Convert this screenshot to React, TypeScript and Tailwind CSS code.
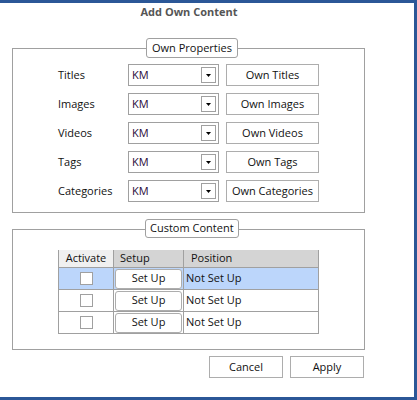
import React from "react";

const rows = ["Titles", "Images", "Videos", "Tags", "Categories"];
const btns = ["Own Titles", "Own Images", "Own Videos", "Own Tags", "Own Categories"];

function Caret() {
  return (
    <svg width="5" height="3" viewBox="0 0 5 3">
      <path d="M0 0 H5 L2.5 3 Z" fill="#000" />
    </svg>
  );
}

function Combo() {
  return (
    <div className="w-[91px] h-[22px] border border-[#a0a0a0] bg-white flex items-center justify-between pl-[3px] pr-[2px]">
      <span className="text-[#2a0a3a]">KM</span>
      <div className="w-[15px] h-[16px] border border-[#a0a0a0] flex items-center justify-center">
        <Caret />
      </div>
    </div>
  );
}

function Btn({ label, w }: { label: string; w: string }) {
  return (
    <div className={`${w} h-[22px] border border-[#adadad] bg-white flex items-center justify-center`}>
      {label}
    </div>
  );
}

export default function App() {
  return (
    <div className="w-[417px] h-[400px] bg-white border-t-[3px] border-r-[3px] border-b-[3px] border-[#2b5797] font-['Open_Sans',sans-serif] text-[11px] text-[#111] overflow-hidden">
      <div className="mt-px h-[16px] leading-[16px] w-[378px] text-center font-bold text-[#555]">Add Own Content</div>

      <div className="relative mt-[28px] ml-[12px] w-[353px] h-[165px] border border-[#a0a0a0]">
        <div className="absolute top-[-11px] left-[133px] h-[20px] px-[5px] border border-[#a0a0a0] rounded-[3px] bg-white flex items-center">
          Own Properties
        </div>
        <div className="pt-[15px] pl-[45px] flex flex-col gap-[7px]">
          {rows.map((r, i) => (
            <div key={r} className="flex items-center h-[22px]">
              <div className="w-[70px]">{r}</div>
              <Combo />
              <div className="ml-[7px]">
                <Btn label={btns[i]} w="w-[93px]" />
              </div>
            </div>
          ))}
        </div>
      </div>

      <div className="relative mt-[16px] ml-[12px] w-[353px] h-[121px] border border-[#a0a0a0]">
        <div className="absolute top-[-11px] left-[132px] h-[19px] px-[4px] border border-[#a0a0a0] rounded-[3px] bg-white flex items-center">
          Custom Content
        </div>
        <div className="pt-[20px] pl-[45px]">
          <div className="w-[261px] border border-[#a0a0a0] border-t-0">
            <div className="flex h-[17px] items-center">
              <div className="w-[55px] h-full bg-[#f0f0f0] border-r border-[#a0a0a0] flex items-center justify-center">Activate</div>
              <div className="w-[70px] h-full bg-[#d4d4d4] border-r border-[#a0a0a0] flex items-center pl-[6px]">Setup</div>
              <div className="flex-1 h-full bg-[#d4d4d4] flex items-center pl-[7px]">Position</div>
            </div>
            {[0, 1, 2].map((i) => (
              <div key={i} className={`flex h-[22px] border-t border-[#a0a0a0] ${i === 0 ? "bg-[#bcd6fb]" : "bg-white"}`}>
                <div className="w-[55px] h-full border-r border-[#a0a0a0] flex items-center justify-center">
                  <div className="w-[13px] h-[13px] border border-[#a0a0a0] bg-white" />
                </div>
                <div className="w-[70px] h-full border-r border-[#a0a0a0] flex items-center pl-[1px] pr-[1px]">
                  <div className="w-full h-[20px] border border-[#adadad] rounded-[3px] bg-white flex items-center justify-center">Set Up</div>
                </div>
                <div className="flex-1 h-full flex items-center pl-[2px]">Not Set Up</div>
              </div>
            ))}
          </div>
        </div>
      </div>

      <div className="mt-[6px] pl-[209px] flex gap-[7px]">
        <Btn label="Cancel" w="w-[74px]" />
        <Btn label="Apply" w="w-[74px]" />
      </div>
    </div>
  );
}
